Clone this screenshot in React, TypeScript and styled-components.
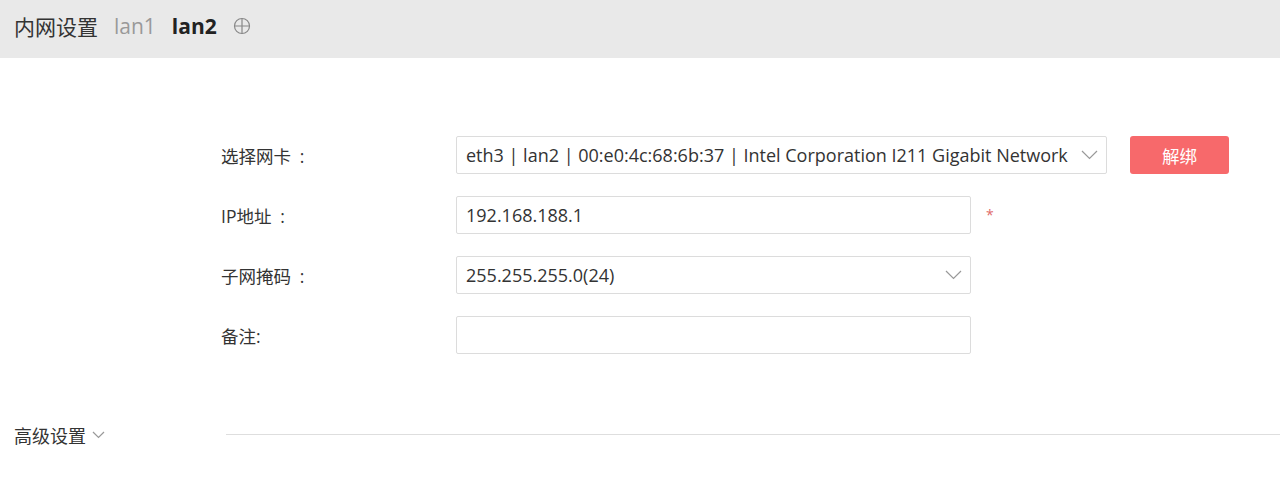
import React from "react";
import styled, { createGlobalStyle } from "styled-components";

const Global = createGlobalStyle`
  html, body { margin: 0; padding: 0; background: #fff; }
  body { font-family: "Open Sans", "Noto Sans CJK SC", sans-serif; color: #333; }
  * { box-sizing: border-box; }
`;

const Page = styled.div`
  width: 1280px;
  height: 484px;
  background: #fff;
  overflow: hidden;
`;

const Header = styled.div`
  height: 58px;
  background: #e9e9e9;
  display: flex;
  align-items: center;
  padding: 0 0 7px 14px;
  gap: 16px;
`;

const Title = styled.span`
  font-size: 21px;
  color: #333;
`;

const Tab = styled.span<{ $active?: boolean }>`
  font-size: 21px;
  color: ${(p) => (p.$active ? "#222" : "#999")};
  font-weight: ${(p) => (p.$active ? 700 : 400)};
`;

const AddIcon = styled.svg`
  width: 18px;
  height: 18px;
`;

const Form = styled.div`
  padding: 78px 0 0 221px;
  display: flex;
  flex-direction: column;
  gap: 22px;
`;

const Row = styled.div`
  display: flex;
  align-items: center;
  height: 38px;
`;

const Label = styled.div`
  width: 235px;
  font-size: 17.5px;
  color: #333;
  white-space: pre;
`;

const Field = styled.div<{ $w: number }>`
  position: relative;
  width: ${(p) => p.$w}px;
  height: 38px;
  border: 1px solid #dcdcdc;
  border-radius: 2px;
  background: #fff;
  display: flex;
  align-items: center;
  padding: 0 36px 0 9px;
  font-size: 18px;
  color: #333;
`;

const Value = styled.span`
  white-space: nowrap;
  overflow: hidden;
  flex: 1;
`;

const Chevron = styled.svg`
  position: absolute;
  right: 8px;
  top: 50%;
  margin-top: -5px;
  width: 17px;
  height: 10px;
`;

const Button = styled.button`
  margin-left: 23px;
  width: 99px;
  height: 38px;
  border: none;
  border-radius: 3px;
  background: #f7696b;
  color: #fff;
  font-family: inherit;
  font-size: 17.5px;
`;

const Required = styled.span`
  margin-left: 15px;
  color: #e06a6a;
  font-size: 14px;
  margin-top: -2px;
`;

const Advanced = styled.div`
  margin-top: 68px;
  display: flex;
  align-items: center;
  padding-left: 14px;
`;

const AdvTitle = styled.span`
  font-size: 18px;
  color: #333;
  display: flex;
  align-items: center;
  gap: 6px;
  width: 212px;
`;

const Line = styled.div`
  flex: 1;
  height: 1px;
  background: #dedede;
  margin-top: -2px;
`;

const SmallChev = styled.svg`
  width: 13px;
  height: 8px;
`;

const Chev = () => (
  <Chevron viewBox="0 0 17 10">
    <path d="M1 1 L8.5 8.5 L16 1" fill="none" stroke="#999" strokeWidth="1.2" />
  </Chevron>
);

export default function App() {
  return (
    <Page>
      <Global />
      <Header>
        <Title>内网设置</Title>
        <Tab>lan1</Tab>
        <Tab $active>lan2</Tab>
        <AddIcon viewBox="0 0 18 18">
          <circle cx="9" cy="9" r="7.5" fill="none" stroke="#888" strokeWidth="1.2" />
          <path d="M9 1.5 V16.5 M1.5 9 H16.5" stroke="#888" strokeWidth="1.2" />
        </AddIcon>
      </Header>
      <Form>
        <Row>
          <Label>{"选择网卡\u2002:"}</Label>
          <Field $w={651}>
            <Value>eth3 | lan2 | 00:e0:4c:68:6b:37 | Intel Corporation I211 Gigabit Network Connection</Value>
            <Chev />
          </Field>
          <Button>解绑</Button>
        </Row>
        <Row>
          <Label>{"IP地址\u2002:"}</Label>
          <Field $w={515}>
            <Value>192.168.188.1</Value>
          </Field>
          <Required>*</Required>
        </Row>
        <Row>
          <Label>{"子网掩码\u2002:"}</Label>
          <Field $w={515}>
            <Value>255.255.255.0(24)</Value>
            <Chev />
          </Field>
        </Row>
        <Row>
          <Label>备注:</Label>
          <Field $w={515} />
        </Row>
      </Form>
      <Advanced>
        <AdvTitle>
          高级设置
          <SmallChev viewBox="0 0 13 8">
            <path d="M1 1 L6.5 6.5 L12 1" fill="none" stroke="#999" strokeWidth="1.2" />
          </SmallChev>
        </AdvTitle>
        <Line />
      </Advanced>
    </Page>
  );
}
